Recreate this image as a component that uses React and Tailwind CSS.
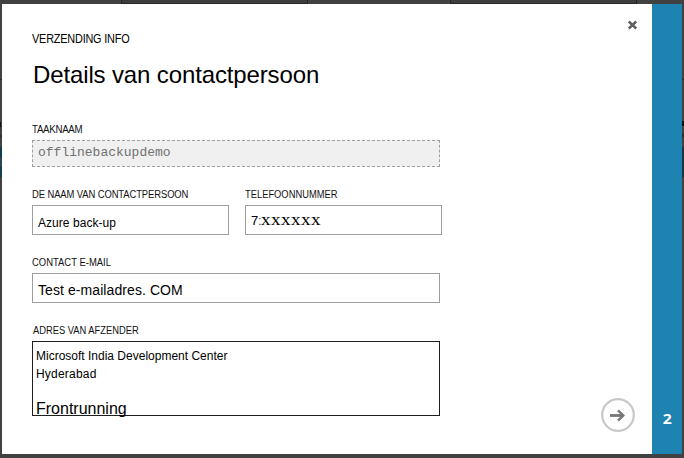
function Label({ children, className = "" }) {
  return (
    <div
      className={`h-3 origin-left whitespace-nowrap text-[10px] leading-3 text-[#111] ${className}`}
    >
      {children}
    </div>
  );
}

function LeftEdge() {
  return (
    <div className="flex w-[2px] shrink-0 flex-col bg-[#414141]">
      <div className="mt-[75px] h-px bg-[#2a2a2a]" />
      <div className="mt-[42px] h-[5px] w-px bg-[#111]" />
      <div className="mt-[8px] h-[3px] bg-[#333]" />
      <div className="mt-[9px] h-[10px] bg-[#103f55]" />
      <div className="h-[10px] bg-[#2c4550]" />
      <div className="h-[10px] bg-[#103f55]" />
    </div>
  );
}

function RightEdge() {
  return (
    <div className="flex w-[2px] shrink-0 flex-col bg-[#414141]">
      <div className="mt-[75px] h-px bg-[#2a2a2a]" />
      <div className="mt-[41px] h-[5px] bg-[#111]" />
      <div className="mt-[8px] h-[3px] bg-[#2c2c2c]" />
      <div className="mt-[10px] h-[30px] bg-[#1a3540]" />
    </div>
  );
}

export default function App() {
  return (
    <div className="flex h-[458px] w-[684px] flex-col overflow-hidden bg-[#414141] font-['Liberation_Sans',Arial,sans-serif] text-black">
      <div className="flex h-1 shrink-0">
        <div className="ml-[121px] w-[187px] border-x border-b border-[#262626] bg-[#3c3c3c]" />
        <div className="ml-[142px] w-[187px] border-x border-b border-[#262626] bg-[#3c3c3c]" />
      </div>
      <div className="flex h-[450px] shrink-0">
        <LeftEdge />
        <main className="flex w-[650px] shrink-0 bg-white pl-[30px]">
          <div className="w-[410px] shrink-0 pt-[27px]">
            <div className="h-4 origin-left scale-x-[0.905] whitespace-nowrap text-[12px] leading-4 tracking-[-0.2px]">
              VERZENDING INFO
            </div>
            <h1 className="mt-3 h-8 whitespace-nowrap pl-px text-[24px] leading-8 tracking-[-0.13px]">
              Details van contactpersoon
            </h1>
            <Label className="mt-[33px] scale-x-[0.97] tracking-[-0.3px]">
              TAAKNAAM
            </Label>
            <div className="mt-1 h-[27px] w-[408px] border border-dashed border-[#a0a0a0] bg-[#f0f0f0] pl-[5px] font-['Liberation_Mono','Courier_New',monospace] text-[13px] leading-[24px] text-[#707070]">
              offlinebackupdemo
            </div>
            <div className="mt-[22px] flex gap-4">
              <div className="w-[197px]">
                <Label className="scale-x-[0.942] tracking-[-0.1px]">
                  DE NAAM VAN CONTACTPERSOON
                </Label>
                <div className="mt-1 h-[30px] border border-[#9e9e9e] pl-[5px] pt-[3px] text-[12px] leading-7 tracking-[0.05px]">
                  Azure back-up
                </div>
              </div>
              <div className="w-[197px]">
                <Label className="scale-x-[0.935]">TELEFOONNUMMER</Label>
                <div className="mt-1 flex h-[30px] border border-[#9e9e9e] pl-[5px] pt-px leading-7">
                  <span className="w-[7px] text-[13px]">7</span>
                  <span className="w-[3px] text-[13px] text-[#555]">:</span>
                  <span className="origin-left scale-x-[1.12] font-['Liberation_Serif','Times_New_Roman',serif] text-[17px] leading-[25px] tracking-[0.45px]">
                    xxxxxx
                  </span>
                </div>
              </div>
            </div>
            <Label className="mt-[22px] scale-x-[0.945]">CONTACT E-MAIL</Label>
            <div className="mt-1 h-[30px] w-[408px] border border-[#9e9e9e] pl-[5px] pt-[2px] text-[14px] leading-7 tracking-[0.08px]">
              Test e-mailadres. COM
            </div>
            <Label className="mt-[22px] scale-x-[0.935] pl-px">
              ADRES VAN AFZENDER
            </Label>
            <div className="mt-1 h-[75px] w-[408px] border border-[#1e1e1e] pl-[3px] pt-[5px] text-[12px] leading-[18px]">
              <div>Microsoft India Development Center</div>
              <div className="tracking-[0.2px]">Hyderabad</div>
              <div className="mt-[16px] h-[20px] text-[16px] leading-5">
                Frontrunning
              </div>
            </div>
          </div>
          <div className="flex grow flex-col items-end justify-between pb-[22px] pr-[17px] pt-[16px]">
            <button aria-label="Sluiten" className="mr-[-3px] size-[11px]">
              <svg width="11" height="11" viewBox="0 0 11 11">
                <path d="M1.8 1.5l7.4 7M9.2 1.5l-7.4 7" stroke="#606060" strokeWidth="2.5" />
              </svg>
            </button>
            <button aria-label="Volgende" className="size-[34px]">
              <svg width="34" height="34" viewBox="0 0 34 34" fill="none">
                <circle cx="17" cy="17" r="15.8" stroke="#c8c8c8" strokeWidth="2.2" />
                <path d="M9 17.5H22" stroke="#777" strokeWidth="2.8" />
                <path d="M17 12.3L22.3 17.5L17 22.7" stroke="#777" strokeWidth="2.4" />
              </svg>
            </button>
          </div>
        </main>
        <aside className="flex w-[30px] shrink-0 items-end justify-center bg-[#1f83b1] pb-[24px] font-['Open_Sans',sans-serif] text-[15px] font-bold leading-6 text-white">
          <span className="scale-x-105">2</span>
        </aside>
        <RightEdge />
      </div>
    </div>
  );
}
